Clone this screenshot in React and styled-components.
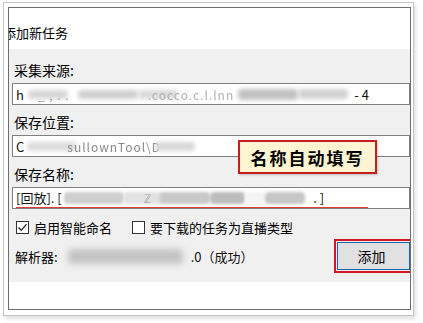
import React from 'react'
import styled, { createGlobalStyle } from 'styled-components'

const GlobalStyle = createGlobalStyle`
  html, body { margin: 0; padding: 0; background: #fff; }
  body { font-family: "Noto Sans CJK SC", "Noto Sans", sans-serif; color: #000; }
`;

const Page = styled.div`
  width: 423px;
  height: 323px;
  overflow: hidden;
  background: #fff;
  padding: 2px 0 0 3px;
  box-sizing: border-box;
`;
const Frame = styled.div`
  width: 411px;
  height: 314px;
  box-sizing: border-box;
  border: 1px solid #c4c4c4;
  padding: 4px 2px 5px 4px;
  box-shadow: 2px 3px 4px rgba(0,0,0,0.12);
  background: #fff;
`;
const Dialog = styled.div`
  position: relative;
  height: 100%;
  box-sizing: border-box;
  border: 1px solid #6d6d6d;
  display: flex;
  flex-direction: column;
  overflow: hidden;
  background: #fff;
`;
const Title = styled.div`
  height: 41px;
  box-sizing: border-box;
  padding-top: 16px;
  margin-left: -6px;
  font-size: 13px;
  line-height: 18px;
  white-space: nowrap;
`;
const Body = styled.div`
  background: #f0f0f0;
  padding: 11px 0 9px 0;
  display: flex;
  flex-direction: column;
`;
const Footer = styled.div`
  flex: 1;
  background: #fff;
`;
const Label = styled.div`
  padding-left: 5px;
  font-size: 14px;
  line-height: 20px;
`;
const Field = styled.div`
  height: 22px;
  box-sizing: border-box;
  margin: 3px 0 7px 3px;
  border: 1px solid #7f7f7f;
  background: #fff;
  padding-left: 3px;
  display: flex;
  align-items: center;
  font-size: 13px;
  white-space: nowrap;
  overflow: hidden;
`;
const Underlined = styled.span`
  display: flex;
  align-items: center;
  align-self: stretch;
  width: 352px;
  border-bottom: 2px solid #e23b3b;
  margin-bottom: -1px;
`;
const Dark = styled.span`
  color: #111;
  margin-left: ${p => p.$ml || 0}px;
`;
const Smudge = styled.span`
  display: inline-block;
  flex: none;
  width: ${p => p.$w}px;
  height: ${p => p.$h || 9}px;
  margin-left: ${p => p.$ml || 0}px;
  background: ${p => p.$c || '#c8c8c8'};
  filter: blur(${p => p.$b || 2}px);
  border-radius: 4px;
`;
const Faint = styled.span`
  color: ${p => p.$c || '#9a9a9a'};
  filter: blur(${p => p.$b || 0.6}px);
  margin-left: ${p => p.$ml || 0}px;
  font-size: 12px;
  letter-spacing: 1px;
`;
const CheckRow = styled.div`
  margin-top: 1px;
  height: 20px;
  padding-left: 7px;
  display: flex;
  align-items: center;
  font-size: 13px;
`;
const CheckItem = styled.label`
  display: flex;
  align-items: center;
  gap: 5px;
  margin-right: ${p => p.$mr || 0}px;
  white-space: nowrap;
`;
const Box = styled.span`
  width: 13px;
  height: 13px;
  box-sizing: border-box;
  border: 1px solid #333;
  background: #fff;
  display: flex;
  align-items: center;
  justify-content: center;
`;
const ParserRow = styled.div`
  margin-top: 2px;
  height: 34px;
  padding-left: 6px;
  display: flex;
  align-items: center;
  font-size: 13px;
  white-space: nowrap;
`;
const Button = styled.div`
  margin-left: auto;
  margin-right: -3px;
  width: 79px;
  height: 34px;
  box-sizing: border-box;
  border: 2px solid #d01a2a;
  padding: 1px;
  background: #fbeaea;
`;
const ButtonFace = styled.div`
  height: 100%;
  box-sizing: border-box;
  border: 1px solid #1467b0;
  background: #e1e1e1;
  display: flex;
  align-items: center;
  justify-content: center;
  padding-right: 4px;
  font-size: 14px;
`;
const Callout = styled.div`
  position: absolute;
  left: 229px;
  top: 132px;
  width: 139px;
  height: 34px;
  box-sizing: border-box;
  border: 2px solid #c41f1f;
  background: #fdf4d2;
  display: flex;
  align-items: center;
  justify-content: center;
  font-size: 17px;
  font-weight: bold;
  letter-spacing: 2px;
  box-shadow: 1px 1px 2px rgba(0,0,0,0.2);
`;

function Check({ checked }) {
  return (
    <Box>
      {checked && (
        <svg width="11" height="11" viewBox="0 0 11 11">
          <path d="M1.5 5.5 L4.3 8.3 L9.5 2.2" fill="none" stroke="#222" strokeWidth="1.3" />
        </svg>
      )}
    </Box>
  );
}

export default function App() {
  return (
    <Page>
      <GlobalStyle />
      <Frame>
        <Dialog>
          <Title>添加新任务</Title>
          <Body>
            <Label>采集来源:</Label>
            <Field>
              <Dark>h</Dark>
              <Smudge $w={40} $ml={4} $c="#d6d6d6" />
              <Faint $ml={-30}>_ , . .</Faint>
              <Smudge $w={60} $ml={8} $c="#cfcfcf" />
              <Smudge $w={40} $c="#dadada" />
              <Faint $ml={-30} $c="#b0b0b0">.cocco.c.l.lnn</Faint>
              <Smudge $w={60} $ml={4} $c="#c2c2c2" $h={11} />
              <Smudge $w={50} $c="#d2d2d2" $h={10} />
              <Dark $ml={6}>- 4</Dark>
            </Field>
            <Label>保存位置:</Label>
            <Field>
              <Dark>C</Dark>
              <Smudge $w={50} $ml={3} $c="#dcdcdc" />
              <Faint $ml={-10} $c="#8a8a8a">sullownTool\D</Faint>
              <Smudge $w={40} $ml={-6} $c="#d8d8d8" />
            </Field>
            <Label>保存名称:</Label>
            <Field>
              <Underlined>
                <Dark>[回放]. [</Dark>
                <Smudge $w={60} $ml={2} $c="#cfcfcf" $h={12} $b={1.5} />
                <Smudge $w={40} $c="#e2e2e2" $h={12} $b={1.5} />
                <Faint $ml={-20} $c="#aaa">ℤ</Faint>
                <Smudge $w={50} $ml={8} $c="#c9c9c9" $h={12} $b={1.5} />
                <Smudge $w={35} $c="#bdbdbd" $h={12} $b={1.5} />
                <Smudge $w={20} $c="#f4f4f4" $h={12} $b={1.5} />
                <Smudge $w={40} $c="#c6c6c6" $h={12} $b={1.5} />
                <Dark $ml={8}>. ]</Dark>
              </Underlined>
            </Field>
            <CheckRow>
              <CheckItem $mr={20}>
                <Check checked />
                启用智能命名
              </CheckItem>
              <CheckItem>
                <Check />
                要下载的任务为直播类型
              </CheckItem>
            </CheckRow>
            <ParserRow>
              解析器:
              <Smudge $w={115} $ml={10} $h={15} $c="#c4c4c4" $b={3} />
              <Dark $ml={8}>.0（成功）</Dark>
              <Button>
                <ButtonFace>添加</ButtonFace>
              </Button>
            </ParserRow>
          </Body>
          <Footer />
          <Callout>名称自动填写</Callout>
        </Dialog>
      </Frame>
    </Page>
  );
}
